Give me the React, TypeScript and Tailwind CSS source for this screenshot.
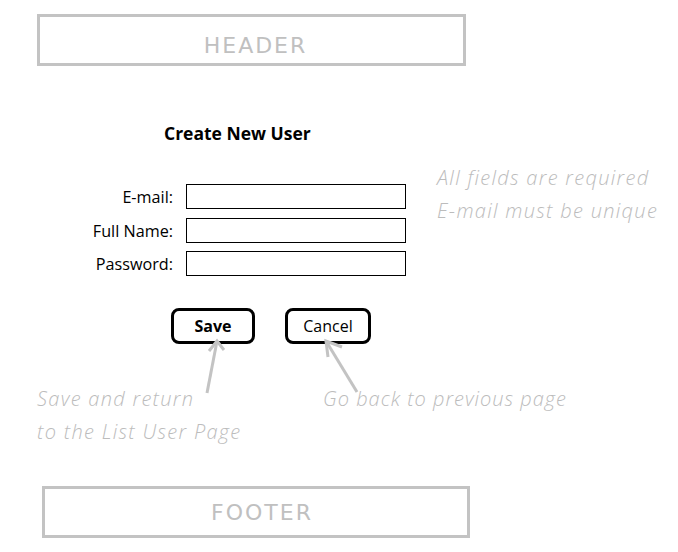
import React from "react";

const hand = "font-['Open_Sans',sans-serif] italic font-light tracking-[1.3px] text-[#bcbcbc]";

export default function App() {
  return (
    <div className="relative w-[678px] h-[552px] bg-white overflow-hidden font-['Open_Sans',sans-serif] text-black">
      {/* Header */}
      <div className="ml-[37px] mt-[14px] w-[429px] h-[52px] border-[3px] border-[#c3c3c3] flex items-center justify-center">
        <span className="font-['DejaVu_Sans',sans-serif] text-[22px] tracking-[2px] text-[#c0c0c0] pl-[8px] pt-[10px]">HEADER</span>
      </div>

      {/* Title */}
      <div className="mt-[55px] ml-[164px] h-[24px] leading-[24px] text-[17.5px] font-bold">Create New User</div>

      {/* Form + notes */}
      <div className="flex">
        <div className="mt-[39px] flex flex-col">
          {[
            { label: "E-mail:", mt: "" },
            { label: "Full Name:", mt: "mt-[9px]" },
            { label: "Password:", mt: "mt-[8px]" },
          ].map((r) => (
            <div key={r.label} className={`flex items-center ${r.mt}`}>
              <div className="w-[173px] text-right text-[16.2px] leading-[22px]">{r.label}</div>
              <div className="ml-[13px] w-[220px] h-[25px] border border-black" />
            </div>
          ))}
        </div>
        <div className={`mt-[16px] ml-[31px] flex flex-col text-[20px] leading-[33px] ${hand}`}>
          <span>All fields are required</span>
          <span>E-mail must be unique</span>
        </div>
      </div>

      {/* Buttons */}
      <div className="mt-[32px] flex">
        <div className="ml-[171px] w-[84px] h-[36px] border-[3px] border-black rounded-[8px] flex items-center justify-center text-[16px] font-bold">
          Save
        </div>
        <div className="ml-[30px] w-[86px] h-[36px] border-[3px] border-black rounded-[8px] flex items-center justify-center text-[16px]">
          Cancel
        </div>
      </div>

      {/* Annotations */}
      <div className={`mt-[38px] flex text-[20px] leading-[33px] ${hand}`}>
        <div className="ml-[37px] w-[286px] flex flex-col">
          <span>Save and return</span>
          <span>to the List User Page</span>
        </div>
        <div className="flex flex-col">
          <span className="tracking-[1px]">Go back to previous page</span>
        </div>
      </div>

      {/* Footer */}
      <div className="ml-[42px] mt-[38px] w-[428px] h-[52px] border-[3px] border-[#c3c3c3] flex items-center justify-center">
        <span className="font-['DejaVu_Sans',sans-serif] text-[22px] tracking-[2px] text-[#c0c0c0] pl-[12px]">FOOTER</span>
      </div>

      {/* Arrows */}
      <svg className="absolute inset-0 pointer-events-none" width="678" height="552" viewBox="0 0 678 552">
        <g stroke="#c3c3c3" strokeWidth="3" fill="none" strokeLinecap="butt">
          <line x1="207" y1="393" x2="217" y2="341" />
          <polyline points="209,351 217,341 224,350" />
          <line x1="357" y1="392" x2="326" y2="341" />
          <polyline points="328,357 326,341 342,347" />
        </g>
      </svg>
    </div>
  );
}
